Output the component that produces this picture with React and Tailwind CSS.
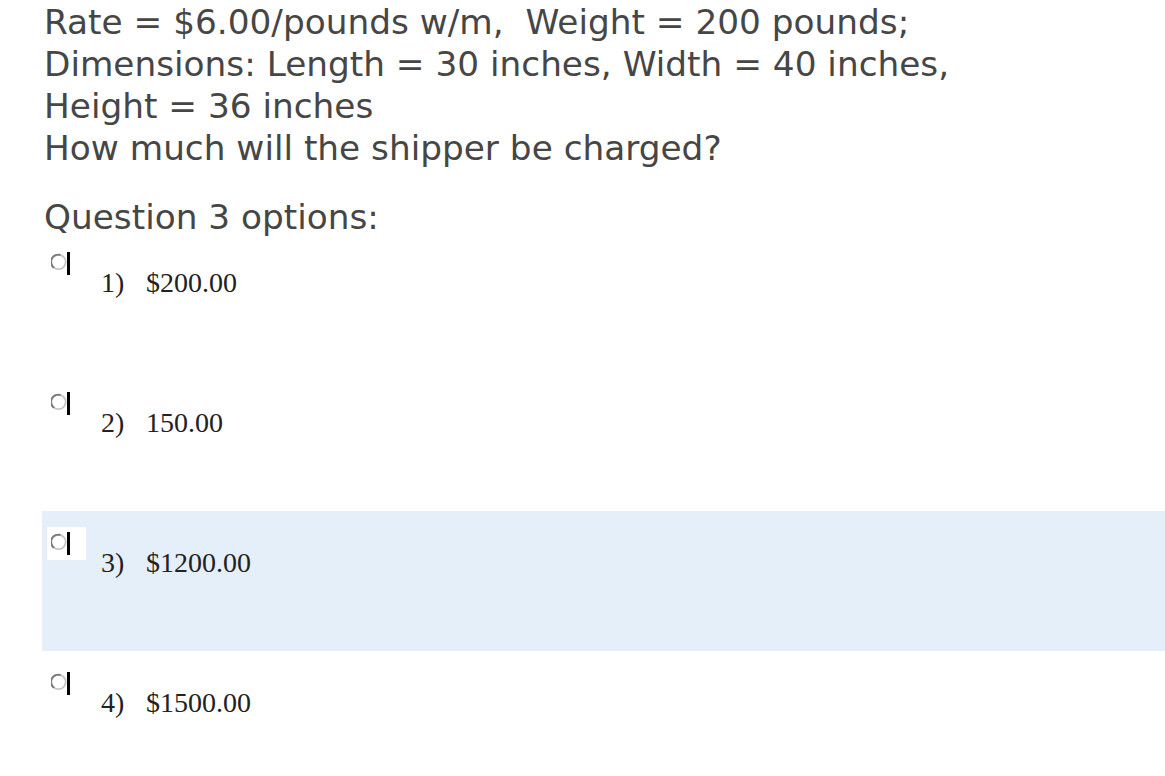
import React from 'react';

const options = [
  { n: '1)', label: '$200.00' },
  { n: '2)', label: '150.00' },
  { n: '3)', label: '$1200.00', active: true },
  { n: '4)', label: '$1500.00' },
];

function Radio({ boxed }) {
  return (
    <div className={`h-[33px] w-[39px] pt-[4px] pl-[4px] ${boxed ? 'bg-white' : ''}`}>
      <div className="relative h-[24px] w-[22px]">
        <svg width="20" height="22" viewBox="0 0 20 22" className="absolute left-0 top-0">
          <circle cx="7.5" cy="11" r="7.2" fill="white" stroke="#c4c4c4" strokeWidth="1.8" />
          <path d="M3.2 16.8 A7.2 7.2 0 0 1 9.5 4" fill="none" stroke="#7a7a7a" strokeWidth="1.9" />
        </svg>
        <div className="absolute left-[16px] top-[1px] h-[23px] w-[3px] bg-black" />
      </div>
    </div>
  );
}

export default function App() {
  return (
    <div className="min-h-screen overflow-hidden bg-white" style={{ fontFamily: '"DejaVu Sans", sans-serif' }}>
      <div className="pl-[44px] pt-[1px] text-[34.3px] leading-[42px] text-[#464646]">
        <p>Rate = $6.00/pounds w/m,&nbsp; Weight = 200 pounds;</p>
        <p>Dimensions: Length = 30 inches, Width = 40 inches,</p>
        <p>Height = 36 inches</p>
        <p>How much will the shipper be charged?</p>
        <p className="mt-[27px]">Question 3 options:</p>
      </div>
      <div className="ml-[42px] mt-[-7px]">
        {options.map((o) => (
          <div key={o.n} className={`flex h-[140px] items-start pl-[5px] pt-[16px] ${o.active ? 'bg-[#e5eff9]' : ''}`}>
            <Radio boxed={o.active} />
            <div
              className="ml-[15px] mt-[20px] flex text-[28px] leading-[32px] text-[#222]"
              style={{ fontFamily: '"Liberation Serif", serif' }}
            >
              <span className="w-[45px]">{o.n}</span>
              <span>{o.label}</span>
            </div>
          </div>
        ))}
      </div>
    </div>
  );
}
